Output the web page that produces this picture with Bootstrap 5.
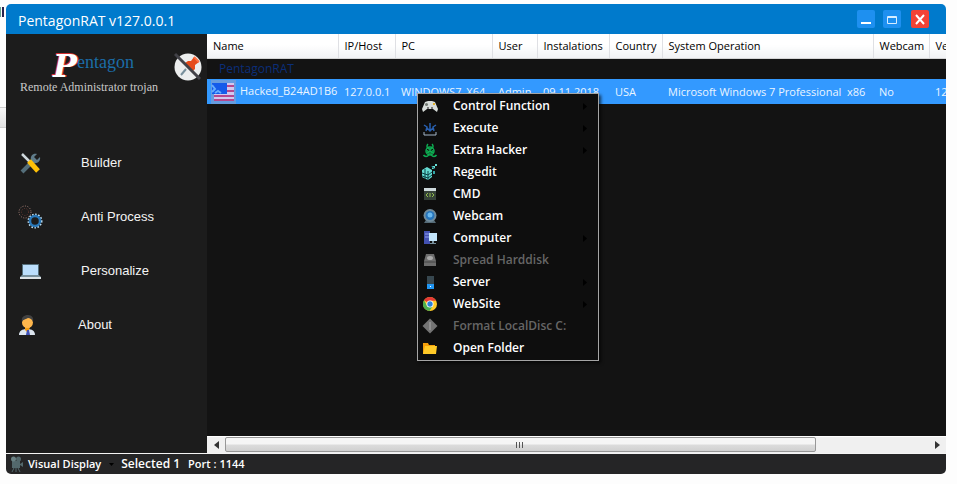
<!DOCTYPE html>
<html lang="en">
<head>
<meta charset="utf-8">
<meta name="viewport" content="width=device-width, initial-scale=1">
<title>PentagonRAT v127.0.0.1</title>
<link rel="stylesheet" href="https://cdn.jsdelivr.net/npm/bootstrap@5.3.0/dist/css/bootstrap.min.css">
<style>
body{font-family:"Open Sans","Noto Sans",sans-serif;font-size:11px;line-height:16px;background:#fdfdfd;color:#fff}
button{border:0;background:none;padding:0;color:inherit}
.desk{padding:4px 11px 10px 6px}
.behind{left:0;top:107px;width:6px;height:21px;background:linear-gradient(#f8f8f8,#e2e2e2);border:solid #cfcfcf;border-width:1px 0}
.behind-mark{left:0;top:7px;width:4px;height:10px;background:linear-gradient(90deg,#6aa58f 0 1px,#fdfdfd 1px 2px,#27234f 2px 4px)}
.win{border-radius:5px}
.titlebar{height:30px;background:#007acc;padding:0 17px 0 12px}
.titlebar h1{font:14px/30px "Open Sans","Noto Sans",sans-serif;padding-top:4px}
.winbtn{width:18px;height:18px;background:#1e90f0;border-radius:2px}
.winbtn.shut{background:#f44336}
.winbtns{gap:8px}
.winbtn.shut{margin-left:2px}
.side{width:201px;background:#1c1c1c}
.brand{padding:16px 5px 0 14px;height:102px}
.brand .initial{font:italic bold 32px/32px "DejaVu Serif",serif;height:30px;color:#fff;text-shadow:-1px -1px 0 #d03030,1px 0 0 #d03030;padding-left:33px}
.brand .rest{font:18px/24px "Liberation Serif",serif;color:#1b6da8}
.brand .sub{font:12px/14px "Liberation Serif",serif;color:#c9c9c9}
.sidelink{height:54px;padding-left:12px;font:13px/18px "Liberation Sans",sans-serif;color:#f4f4f4;text-decoration:none;gap:36px}
.main{background:#131313}
.hosts{table-layout:fixed;width:960px;border-collapse:collapse;white-space:pre}
.hosts th,.hosts td{padding:0 0 0 6px;font-weight:400;vertical-align:middle}
.hosts thead th{height:24px;color:#000;background:linear-gradient(#fff 45%,#f1f2f4);border-right:1px solid #dfe0e4;border-bottom:1px solid #d5d5d5}
.hosts .group th{height:21px;color:#0b2e78;padding-left:12px;font-size:12px}
.hosts .picked td{height:25px;background:#3399ff;color:#eaf5ff}
.hosts .picked td:first-child{padding-left:4px}
.hosts .picked svg{margin-right:4px}
.ctx{left:210px;top:59px;width:182px;padding:1px;background:#0e0e0e;border:1px solid #a5a5a5;box-shadow:2px 2px 3px #000a}
.ctx button{height:22px;padding:0 10px 0 3px;font-size:12px;font-weight:600}
.ctx button svg:first-child{margin-right:15px}
.ctx button:disabled{color:#666}
.hbar{height:17px;background:#f0f0f0;border-top:1px solid #fff}
.hbar button{width:18px}
.thumb{width:84%;height:15px;border:1px solid #979797;border-radius:2px;background:linear-gradient(#f5f5f5 48%,#dcdcdc 52%,#d0d0d0)}
.grip{width:8px;height:6px;background:repeating-linear-gradient(90deg,#555 0 1px,transparent 1px 3px)}
.status{height:21px;background:#252526;border-top:1px solid #f4f4f4;font-weight:600;padding-left:4px}
.status button{font-weight:600}
.status .picked-count{font-size:12px;margin-left:7px}
.status .port{margin-left:8px}
</style>
<script src="https://cdn.jsdelivr.net/npm/bootstrap@5.3.0/dist/js/bootstrap.bundle.min.js"></script>
</head>
<body class="overflow-hidden">
<div class="behind position-absolute"></div><div class="behind-mark position-absolute"></div>
<div class="desk vh-100 d-flex">
<div class="win d-flex flex-column flex-grow-1 overflow-hidden">
  <header class="titlebar d-flex align-items-center justify-content-between">
    <h1 class="m-0">PentagonRAT v127.0.0.1</h1>
    <div class="winbtns d-flex">
      <button class="winbtn d-flex" aria-label="Minimize"><svg width="18" height="18"><path d="M4 12h10v2H4z" fill="#fff"/></svg></button>
      <button class="winbtn d-flex" aria-label="Maximize"><svg width="18" height="18"><path d="M4.500 6.500h9v7h-9zM4 7.500h10" fill="none" stroke="#d8edff"/></svg></button>
      <button class="winbtn shut d-flex" aria-label="Close"><svg width="18" height="18"><path d="M5 5l8 9M13 5l-8 9" stroke="#fff" stroke-width="2"/></svg></button>
    </div>
  </header>
  <div class="d-flex flex-grow-1 overflow-hidden">
    <nav class="side flex-shrink-0">
      <div class="brand d-flex justify-content-between">
        <div>
          <div class="d-flex"><span class="initial">P</span><span class="rest">entagon</span></div>
          <div class="sub">Remote Administrator trojan</div>
        </div>
        <svg width="28" height="32" viewBox="0 0 28 32"><circle cx="14" cy="17" r="13.500" fill="#eceeee"/><path d="M12 19l-5 6" stroke="#78909c" stroke-width="2"/><path d="M14 11l3 0 3-4 5 5-4 3v4l-2 2-8-8z" fill="#e64a19"/><path d="M20 7l5 5" stroke="#ff7043" stroke-width="2"/><path d="M1 4l25 25" stroke="#424248" stroke-width="3"/></svg>
      </div>
      <a class="sidelink d-flex align-items-center" href="#builder"><svg width="27" height="24" viewBox="0 0 27 24"><path d="M4 21l11-11" stroke="#546e7a" stroke-width="4"/><path d="M13 9c-1-4 2-7 6-6l-3 3 3 3 3-3c1 4-3 7-6 6z" fill="#607d8b"/><path d="M4 3l9 9" stroke="#cfd8dc" stroke-width="2.500"/><path d="M11 10l9 10" stroke="#ffc107" stroke-width="5"/></svg>Builder</a>
      <a class="sidelink d-flex align-items-center" href="#process"><svg width="27" height="26" viewBox="0 0 27 26" fill="none"><circle cx="7" cy="8" r="6" stroke="#a98078" stroke-dasharray="1 1.500"/><circle cx="7" cy="8" r="3.500" stroke="#6c3932" stroke-dasharray="1 1.500"/><circle cx="17" cy="17" r="6.500" stroke="#bfe0f4" stroke-width="2" stroke-dasharray="1.500 1.500"/><circle cx="17" cy="17" r="5" stroke="#2877b8" stroke-width="2.500"/></svg>Anti Process</a>
      <a class="sidelink d-flex align-items-center" href="#personalize"><svg width="27" height="18" viewBox="0 0 27 18"><path d="M4 2h17v11H4z" fill="#546e7a"/><path d="M5 3h15v10H5z" fill="#bbdefb"/><path d="M4 13h17l2 2H2z" fill="#78909c"/><path d="M2 15h21v2H2z" fill="#dce3e6"/></svg>Personalize</a>
      <a class="sidelink d-flex align-items-center" href="#about"><svg width="24" height="22" viewBox="0 0 24 22"><path d="M1 21c0-4 3-6 8-6s8 2 8 6z" fill="#dce5ef"/><path d="M7 13h5l-2 6-3-3z" fill="#f39c12"/><path d="M9 16h2l1 5H8z" fill="#3f51b5"/><circle cx="9.500" cy="8.500" r="5.500" fill="#ffb74d"/><path d="M4 8c-1-5 2-7 6-7s6 3 5 7c-1-3-3-4-5-4-3 2-5 1-6 4z" fill="#424242"/></svg>About</a>
    </nav>
    <main class="main position-relative flex-grow-1 overflow-hidden d-flex flex-column">
      <div class="flex-grow-1 overflow-hidden">
      <table class="hosts">
        <colgroup><col style="width:131px"><col style="width:57px"><col style="width:97px"><col style="width:45px"><col style="width:72px"><col style="width:53px"><col style="width:211px"><col style="width:56px"><col></colgroup>
        <thead><tr><th>Name</th><th>IP/Host</th><th>PC</th><th>User</th><th>Instalations</th><th>Country</th><th>System Operation</th><th>Webcam</th><th>Ve</th></tr></thead>
        <tbody>
          <tr class="group"><th colspan="9">PentagonRAT</th></tr>
          <tr class="picked"><td><svg width="25" height="24"><path d="M0 0h25v24H0z" fill="#669de0"/><path d="M3 3h20v17H3z" fill="#d2c8ee"/><path d="M3 6h20M3 11h20M3 16h20M3 20h20" stroke="#b5488f" stroke-width="2"/><path d="M1 3h15v11H1z" fill="#145bea"/><path d="M1 5l3 4-3 3M4 13l3-2 3 2" stroke="#65adff" stroke-width="2" fill="none"/></svg>Hacked_B24AD1B6</td><td>127.0.0.1</td><td>WINDOWS7_X64</td><td>Admin</td><td>09.11.2018</td><td>USA</td><td>Microsoft Windows 7 Professional  x86</td><td>No</td><td>12</td></tr>
        </tbody>
      </table>
      </div>
      <div class="hbar d-flex">
        <button class="d-flex align-items-center justify-content-center" aria-label="Scroll left"><svg width="5" height="8"><path d="M5 0v8L0 4z" fill="#333"/></svg></button>
        <div class="flex-grow-1"><div class="thumb d-flex align-items-center justify-content-center"><span class="grip"></span></div></div>
        <button class="d-flex align-items-center justify-content-center" aria-label="Scroll right"><svg width="5" height="8"><path d="M0 0v8l5-4z" fill="#333"/></svg></button>
      </div>
      <div class="ctx position-absolute d-flex flex-column" role="menu">
        <button class="d-flex align-items-center" role="menuitem"><svg width="16" height="16" viewBox="0 0 16 16"><path d="M3 4l3-1h4l3 1 3 7-1 3-4-3H5l-4 3-1-3z" fill="#d7dcd9"/><circle cx="4.500" cy="6.500" r="1.500" fill="#707870"/><path d="M11 5h2v2h-2z" fill="#e0b02b"/><path d="M5 9h2v2H5zM9 9h2v2H9z" fill="#777"/></svg><span class="me-auto">Control Function</span><svg width="4" height="7"><path d="M0 0v7l4-3.500z"/></svg></button>
        <button class="d-flex align-items-center" role="menuitem"><svg width="16" height="16" viewBox="0 0 16 16" fill="none"><path d="M2 12v3h12v-3" stroke="#a4b6c9"/><path d="M8 3v8M5 8l3 3 3-3M2 5l3 2-1 4M14 5l-3 2 1 4" stroke="#285fae" stroke-width="1.500"/></svg><span class="me-auto">Execute</span><svg width="4" height="7"><path d="M0 0v7l4-3.500z"/></svg></button>
        <button class="d-flex align-items-center" role="menuitem"><svg width="16" height="16" viewBox="0 0 16 16" fill="none" stroke="#0eac52" stroke-width="1.500"><path d="M6 2a3 3 0 1 0 4 0M1.500 13a3 3 0 1 0 3-4.500M14.500 13a3 3 0 1 1-3-4.500"/><circle cx="8" cy="9" r="4"/><path d="M8 6v3l-3 2M8 9l3 2"/></svg><span class="me-auto">Extra Hacker</span><svg width="4" height="7"><path d="M0 0v7l4-3.500z"/></svg></button>
        <button class="d-flex align-items-center" role="menuitem"><svg width="16" height="16" viewBox="0 0 16 16"><path d="M0 6l5-3 5 3v7l-4 3-6-3zM10 2h3v3h-3zM13 0h2v2h-2z" fill="#65dbd2"/><path d="M0 9l6 2 4-3M0 12l6 2 4-3M3 5v10M6 7v9M9 2l4 3" stroke="#0d4448" fill="none"/><path d="M11 7h2v3h-2z" fill="#34a6a5"/></svg><span class="me-auto">Regedit</span></button>
        <button class="d-flex align-items-center" role="menuitem"><svg width="16" height="16" viewBox="0 0 16 16"><path d="M2 2h12v12H2z" fill="#354139"/><path d="M2 2h12v3H2z" fill="#ced9dc"/><path d="M6 7L4 9l2 2M10 7l2 2-2 2M8 7v4" fill="none" stroke="#92bd4d"/></svg><span class="me-auto">CMD</span></button>
        <button class="d-flex align-items-center" role="menuitem"><svg width="16" height="16" viewBox="0 0 16 16"><path d="M4 12h8l2 3H2z" fill="#566b77"/><circle cx="8" cy="7.500" r="6.500" fill="#718b9b"/><circle cx="8" cy="7.500" r="4.500" fill="#2674bb"/><circle cx="8" cy="7" r="2.500" fill="#69b8ef"/></svg><span class="me-auto">Webcam</span></button>
        <button class="d-flex align-items-center" role="menuitem"><svg width="16" height="16" viewBox="0 0 16 16"><path d="M2 1h6v13H2z" fill="#4351b2"/><path d="M3 4h4M3 7h4" stroke="#92a0ee"/><path d="M7 3h8v8H7z" fill="#c3e5fb"/><path d="M10 11h2v2h2v1H8v-1h2z" fill="#78909c"/></svg><span class="me-auto">Computer</span><svg width="4" height="7"><path d="M0 0v7l4-3.500z"/></svg></button>
        <button class="d-flex align-items-center" role="menuitem" disabled><svg width="16" height="16" viewBox="0 0 16 16"><path d="M4 2h8l2 7v5H2V9z" fill="#6d6d6d"/><ellipse cx="8" cy="6" rx="3" ry="2" fill="#aaa"/><path d="M2 10h12" stroke="#444"/></svg><span class="me-auto">Spread Harddisk</span></button>
        <button class="d-flex align-items-center" role="menuitem"><svg width="16" height="16" viewBox="0 0 16 16"><path d="M5 2h7v8H5z" fill="#37474f"/><path d="M5 10h7v5H5z" fill="#2196f3"/><path d="M8 12h1v1H8z" fill="#fff"/></svg><span class="me-auto">Server</span><svg width="4" height="7"><path d="M0 0v7l4-3.500z"/></svg></button>
        <button class="d-flex align-items-center" role="menuitem"><svg width="16" height="16" viewBox="0 0 16 16"><circle cx="8" cy="8" r="7" fill="#ffca28"/><path d="M8 8L2 4.300A7 7 0 0 1 14.100 4.700H8z" fill="#e53935"/><path d="M2 4.300A7 7 0 0 0 7.500 15l3.500-5.300H5z" fill="#4caf50"/><circle cx="8" cy="8" r="3.500" fill="#fff"/><circle cx="8" cy="8" r="2.700" fill="#2d82d8"/></svg><span class="me-auto">WebSite</span><svg width="4" height="7"><path d="M0 0v7l4-3.500z"/></svg></button>
        <button class="d-flex align-items-center" role="menuitem" disabled><svg width="16" height="16" viewBox="0 0 16 16"><path d="M8 0.500l7.500 7.500L8 15.500.500 8z" fill="#747474"/><path d="M8 4v8" stroke="#aaa"/></svg><span class="me-auto">Format LocalDisc C:</span></button>
        <button class="d-flex align-items-center" role="menuitem"><svg width="16" height="16" viewBox="0 0 16 16"><path d="M1 3h5l1 2h6v9H1z" fill="#f59f0a"/><path d="M3 6h12l-1 8H1z" fill="#ffca28"/></svg><span class="me-auto">Open Folder</span></button>
      </div>
    </main>
  </div>
  <footer class="status d-flex align-items-center">
    <button class="d-flex align-items-center"><svg class="me-1" width="14" height="16" viewBox="0 0 14 16"><path d="M2 5h8v7H2zM10 8l3-2v5l-3-2z" fill="#53686c"/><circle cx="3.500" cy="3" r="2.500" fill="#6a8184"/><circle cx="8.500" cy="3" r="2.500" fill="#53686c"/><path d="M4 12l-2 4M6 12v4M8 12l2 4" stroke="#53686c"/></svg>Visual Display<svg class="ms-2" width="5" height="3"><path d="M0 0h5L2.500 3z"/></svg></button>
    <span class="picked-count">Selected 1</span><span class="port">Port : 1144</span>
  </footer>
</div>
</div>
</body>
</html>
